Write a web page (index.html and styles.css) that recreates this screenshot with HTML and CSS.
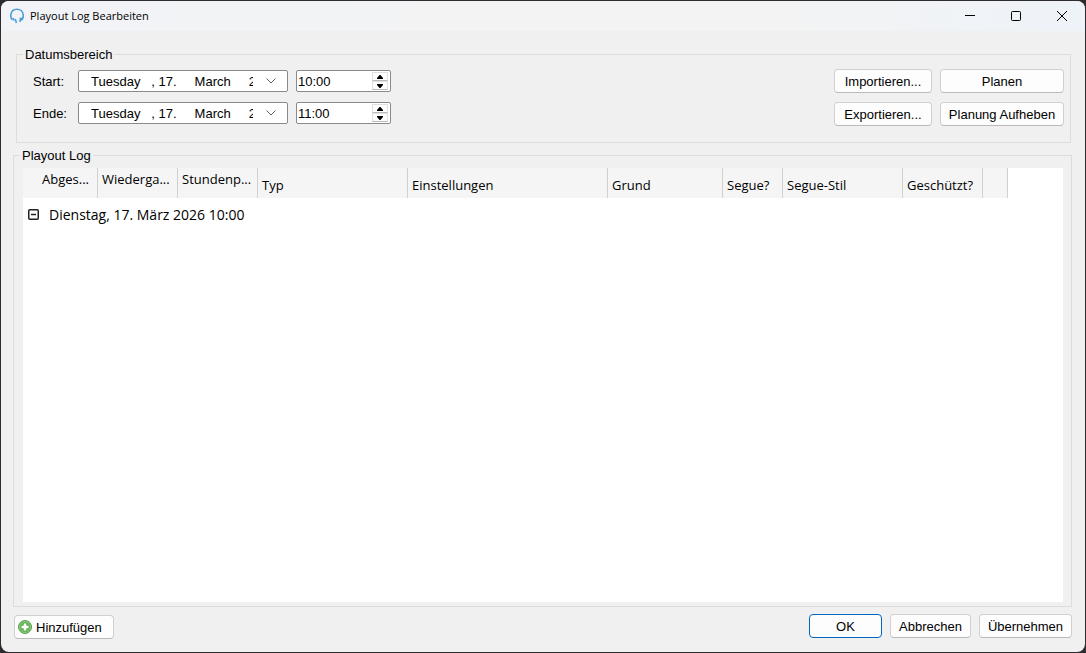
FILE: index.html
```
<!DOCTYPE html>
<html lang="de">

<head>
  <meta charset="UTF-8">
  <meta name="viewport" content="width=device-width, initial-scale=1.0">
  <title>Playout Log Bearbeiten</title>
  <link rel="stylesheet" href="styles.css">
</head>

<body>
  <div class="window">
    <header class="titlebar">
      <svg class="logo" width="16" height="16" viewBox="0 0 16 16" fill="none" stroke="#4a9fd8">
        <path d="M3.200 11.800C1.800 10.200 1.600 8.500 1.800 7 2.300 3.200 5 1.200 8 1.200s5.900 2 6.300 5.800c.2 1.800-.2 3.400-1.300 4.800" stroke-width="1.600" />
        <path d="M4 10l.8 2.600M6.200 11l1.300 4M11.600 9.600l-.7 4.200M12.800 9.800l-.8 2.800" stroke-width="1.600" />
      </svg>
      <h1>Playout Log Bearbeiten</h1>
      <div class="controls">
        <button type="button" aria-label="Minimieren">
          <svg width="10" height="10" viewBox="0 0 10 10"><path d="M0 4.500h10" /></svg>
        </button>
        <button type="button" aria-label="Maximieren">
          <svg width="10" height="10" viewBox="0 0 10 10"><rect x=".5" y=".5" width="9" height="9" rx="1" /></svg>
        </button>
        <button type="button" aria-label="Schließen">
          <svg width="10" height="10" viewBox="0 0 10 10"><path d="M0 0l10 10M10 0L0 10" /></svg>
        </button>
      </div>
    </header>

    <form class="content">
      <fieldset class="range">
        <legend>Datumsbereich</legend>
        <div class="range-body">
          <div class="fields">
            <div class="field">
              <label for="start-date">Start:</label>
              <div class="date">
                <select id="start-date">
                  <option>Tuesday&nbsp;&nbsp;&nbsp;,&nbsp;17.&nbsp;&nbsp;&nbsp;&nbsp;&nbsp;March&nbsp;&nbsp;&nbsp;&nbsp;&nbsp;2026</option>
                </select>
                <svg width="10" height="6" viewBox="0 0 10 6"><path d="M.5 .5L5 5 9.500 .5" /></svg>
              </div>
              <div class="time">
                <input type="text" value="10:00" aria-label="Startzeit">
                <div class="spin">
                  <button type="button" aria-label="Später"><svg width="6" height="4" viewBox="0 0 6 4"><path d="M0 4V3l2.500-3h1L6 3v1z" /></svg></button>
                  <button type="button" aria-label="Früher"><svg width="6" height="4" viewBox="0 0 6 4"><path d="M0 0v1l2.500 3h1L6 1V0z" /></svg></button>
                </div>
              </div>
            </div>
            <div class="field">
              <label for="end-date">Ende:</label>
              <div class="date">
                <select id="end-date">
                  <option>Tuesday&nbsp;&nbsp;&nbsp;,&nbsp;17.&nbsp;&nbsp;&nbsp;&nbsp;&nbsp;March&nbsp;&nbsp;&nbsp;&nbsp;&nbsp;2026</option>
                </select>
                <svg width="10" height="6" viewBox="0 0 10 6"><path d="M.5 .5L5 5 9.500 .5" /></svg>
              </div>
              <div class="time">
                <input type="text" value="11:00" aria-label="Endzeit">
                <div class="spin">
                  <button type="button" aria-label="Später"><svg width="6" height="4" viewBox="0 0 6 4"><path d="M0 4V3l2.500-3h1L6 3v1z" /></svg></button>
                  <button type="button" aria-label="Früher"><svg width="6" height="4" viewBox="0 0 6 4"><path d="M0 0v1l2.500 3h1L6 1V0z" /></svg></button>
                </div>
              </div>
            </div>
          </div>
          <div class="actions">
            <button type="button" class="btn">Importieren...</button>
            <button type="button" class="btn">Planen</button>
            <button type="button" class="btn">Exportieren...</button>
            <button type="button" class="btn">Planung Aufheben</button>
          </div>
        </div>
      </fieldset>

      <fieldset class="log">
        <legend>Playout Log</legend>
        <div class="list">
          <table>
            <colgroup>
              <col class="w-first">
              <col class="w-80">
              <col class="w-80">
              <col class="w-type">
              <col class="w-settings">
              <col class="w-reason">
              <col class="w-segue">
              <col class="w-style">
              <col class="w-80">
              <col class="w-last">
            </colgroup>
            <thead>
              <tr>
                <th class="high first">Abges...</th>
                <th class="high">Wiederga...</th>
                <th class="high">Stundenp...</th>
                <th>Typ</th>
                <th>Einstellungen</th>
                <th>Grund</th>
                <th>Segue?</th>
                <th>Segue-Stil</th>
                <th>Geschützt?</th>
                <th></th>
              </tr>
            </thead>
            <tbody>
              <tr>
                <td colspan="10">
                  <div class="group">
                    <button type="button" class="toggle" aria-label="Zuklappen">
                      <svg width="11" height="11" viewBox="0 0 11 11"><rect x=".75" y=".75" width="9.500" height="9.500" rx="1" /><path d="M3 5.500h5" /></svg>
                    </button>
                    <span>Dienstag, 17. März 2026 10:00</span>
                  </div>
                </td>
              </tr>
            </tbody>
          </table>
        </div>
      </fieldset>

      <footer class="footer">
        <button type="button" class="btn add">
          <svg width="14" height="14" viewBox="0 0 14 14">
            <circle cx="7" cy="7" r="6.500" fill="#62b154" stroke="#5aa04f" />
            <circle cx="7" cy="7" r="5.500" fill="none" stroke="#8fcb83" />
            <path d="M7 3.500v7M3.500 7h7" stroke="#fff" stroke-width="2.400" />
          </svg>
          Hinzufügen
        </button>
        <div class="confirm">
          <button type="button" class="btn ok">OK</button>
          <button type="button" class="btn">Abbrechen</button>
          <button type="button" class="btn">Übernehmen</button>
        </div>
      </footer>
    </form>
  </div>
</body>

</html>
```

FILE: styles.css
```
* {
  box-sizing: border-box;
  margin: 0;
  padding: 0;
}

body {
  height: 100vh;
  padding: 1px;
  background-color: #2d2b2e;
  color: #000;
  font-family: "Liberation Sans", Arial, sans-serif;
  font-size: 13px;
}

button,
input,
select {
  font: inherit;
  color: inherit;
}

svg {
  display: block;
}

.window {
  display: flex;
  flex-direction: column;
  height: 100%;
  background-color: #f0f0f0;
  border-radius: 8px;
  overflow: hidden;
}

/* title bar */
.titlebar {
  display: flex;
  align-items: center;
  height: 30px;
  padding-left: 8px;
  background: linear-gradient(90deg, #f1f3f7, #f3f3f3 50%, #f3f3f3 70%, #eef3f9);
}

.titlebar h1 {
  flex: 1;
  margin-left: 5px;
  padding-bottom: 2px;
  font-family: "Open Sans", "Noto Sans", sans-serif;
  font-size: 11px;
  font-weight: normal;
}

.controls {
  display: flex;
}

.controls button {
  display: flex;
  align-items: center;
  justify-content: center;
  width: 46px;
  height: 28px;
  border: none;
  background: none;
}

.controls svg {
  fill: none;
  stroke: #000;
}

.content {
  flex: 1;
  display: flex;
  flex-direction: column;
  padding: 14px 13px 13px 12px;
}

fieldset {
  min-width: 0;
  border: 1px solid #dcdcdc;
}

legend {
  margin-left: 6px;
  padding: 2px 2px 0;
  line-height: 16px;
}

/* date range */
.range {
  margin: 0 1px 0 3px;
}

.range-body {
  display: flex;
  justify-content: space-between;
  align-items: flex-start;
  padding: 6px 6px 16px 16px;
}

.fields {
  display: grid;
  gap: 10px;
  padding-top: 1px;
}

.field {
  display: flex;
  align-items: center;
  gap: 8px;
}

.field label {
  width: 37px;
}

.date {
  display: grid;
  align-items: center;
  width: 210px;
}

.date select,
.date svg {
  grid-area: 1 / 1;
}

.date select {
  width: 100%;
  height: 22px;
  padding: 0 34px 0 12px;
  border: 1px solid #8a8a8a;
  border-radius: 2px;
  background-color: #fff;
  appearance: none;
}

.date svg {
  justify-self: end;
  margin-right: 12px;
  fill: none;
  stroke: #606060;
  pointer-events: none;
}

.time {
  display: flex;
  width: 95px;
  height: 22px;
  padding: 1px;
  border: 1px solid #8a8a8a;
  border-radius: 2px;
  background-color: #fff;
}

.time input {
  flex: 1;
  min-width: 0;
  border: none;
  background: none;
}

.spin {
  display: grid;
  grid-template-rows: 1fr 1fr;
  width: 16px;
  margin-right: 1px;
  background-color: #f0f0f0;
}

.spin button {
  display: flex;
  align-items: center;
  justify-content: center;
  border: 1px solid #e0e0e0;
  border-bottom-color: #bababa;
  background-color: #fdfdfd;
}

.actions {
  display: grid;
  grid-template-columns: 98px 124px;
  gap: 9px 8px;
}

.btn {
  height: 24px;
  padding: 0 6px;
  border: 1px solid #d0d0d0;
  border-bottom-color: #bababa;
  border-radius: 4px;
  background-color: #fdfdfd;
  white-space: nowrap;
}

/* log list */
.log {
  flex: 1;
  display: flex;
  flex-direction: column;
  margin: 3px 0 0;
  padding: 4px 8px 4px 9px;
}

.log legend {
  margin-left: -3px;
}

.list {
  flex: 1;
  background-color: #fff;
  font-family: "Open Sans", "Noto Sans", sans-serif;
}

table {
  width: 985px;
  table-layout: fixed;
  border-collapse: separate;
  border-spacing: 0;
}

.w-first {
  width: 75px;
}

.w-80 {
  width: 80px;
}

.w-type {
  width: 150px;
}

.w-settings {
  width: 200px;
}

.w-reason {
  width: 115px;
}

.w-segue {
  width: 60px;
}

.w-style {
  width: 120px;
}

.w-last {
  width: 25px;
}

th {
  height: 30px;
  padding: 3px 0 0 4px;
  border-right: 1px solid #d0d0d0;
  background-color: #f5f5f5;
  font-size: 13px;
  font-weight: normal;
  line-height: 18px;
  text-align: left;
  white-space: nowrap;
}

th.high {
  padding-top: 2px;
  vertical-align: top;
}

th.first {
  padding-left: 19px;
}

.group {
  display: flex;
  align-items: center;
  gap: 10px;
  height: 32px;
  padding-left: 5px;
  font-size: 14px;
}

.toggle {
  border: none;
  background: none;
}

.toggle svg {
  fill: none;
  stroke: #222;
  stroke-width: 1.5;
}

/* bottom buttons */
.footer {
  display: flex;
  justify-content: space-between;
  align-items: flex-start;
  padding-top: 7px;
}

.add {
  display: flex;
  align-items: center;
  gap: 4px;
  width: 100px;
  margin: 1px 0 0 1px;
  padding: 0 3px;
}

.confirm {
  display: grid;
  grid-template-columns: 73px 81px 93px;
  gap: 8px;
}

.ok {
  border-color: #0067c0;
}
```
